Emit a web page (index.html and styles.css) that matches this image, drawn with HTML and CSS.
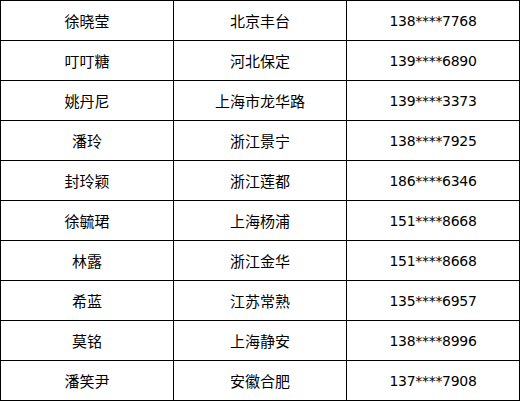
FILE: index.html
```html
<!DOCTYPE html>
<html lang="zh-CN">
<head>
<meta charset="utf-8">
<title>联系人</title>
<link rel="stylesheet" href="styles.css">
</head>
<body>
<table class="list">
  <tbody>
    <tr><td>徐晓莹</td><td>北京丰台</td><td class="num">138****7768</td></tr>
    <tr><td>叮叮糖</td><td>河北保定</td><td class="num">139****6890</td></tr>
    <tr><td>姚丹尼</td><td>上海市龙华路</td><td class="num">139****3373</td></tr>
    <tr><td>潘玲</td><td>浙江景宁</td><td class="num">138****7925</td></tr>
    <tr><td>封玲颖</td><td>浙江莲都</td><td class="num">186****6346</td></tr>
    <tr><td>徐毓珺</td><td>上海杨浦</td><td class="num">151****8668</td></tr>
    <tr><td>林露</td><td>浙江金华</td><td class="num">151****8668</td></tr>
    <tr><td>希蓝</td><td>江苏常熟</td><td class="num">135****6957</td></tr>
    <tr><td>莫铭</td><td>上海静安</td><td class="num">138****8996</td></tr>
    <tr><td>潘笑尹</td><td>安徽合肥</td><td class="num">137****7908</td></tr>
  </tbody>
</table>
</body>
</html>
```

FILE: styles.css
```css
html, body {
  margin: 0;
  padding: 0;
  background: #fff;
}
.list {
  border-collapse: separate;
  border-spacing: 0;
  table-layout: fixed;
  width: 520px;
  border-top: 1px solid #000;
  border-left: 1px solid #000;
  font-family: "Noto Sans CJK SC", "Noto Sans", sans-serif;
  font-size: 15px;
  font-weight: 400;
  color: #000;
}
.list td {
  width: 172px;
  height: 39px;
  padding: 0;
  border-right: 1px solid #000;
  border-bottom: 1px solid #000;
  text-align: center;
  vertical-align: middle;
  line-height: 20px;
}
.list td.num {
  font-family: "DejaVu Sans", sans-serif;
  font-size: 14px;
  letter-spacing: -0.3px;
}
```
